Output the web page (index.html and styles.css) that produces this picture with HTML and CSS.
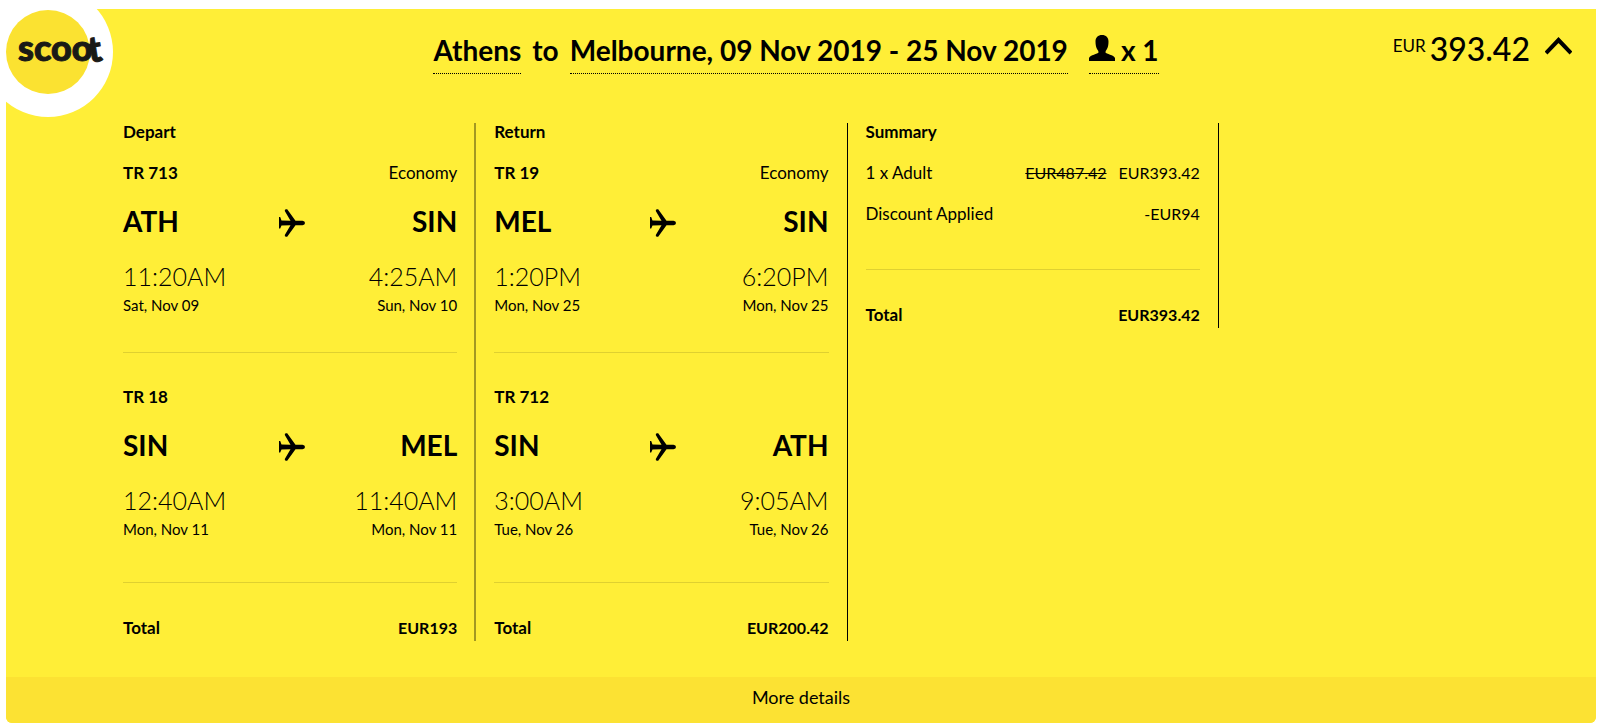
FILE: index.html
```
<!DOCTYPE html>
<html lang="en">
<head>
    <meta charset="UTF-8">
    <meta name="viewport" content="width=device-width, initial-scale=1.0">
    <title>Athens to Melbourne - Scoot</title>
    <link rel="stylesheet" href="styles.css">
</head>
<body>

<!-- shared icons -->
<svg class="sprite" aria-hidden="true">
    <symbol id="plane" viewBox="0 0 26 28">
        <path d="M0 8h1.200L2.500 11.500l9 .3L5.800 2Q5.500 .3 7 .3h1.200L16.500 11.800H23.500Q26 12.200 26 14T23.500 16.200H16.500L8.200 27.700H7Q5.500 27.700 5.800 26L11.500 16.200l-9 .3L1.200 19.500H0z"/>
    </symbol>
</svg>

<main class="card">
    <svg class="logo" viewBox="0 0 130 130" role="img" aria-label="Scoot">
        <circle cx="65" cy="65" r="65" fill="#fff"/>
        <circle cx="65" cy="65" r="42" fill="#fbe231"/>
        <text class="logo-text" x="35" y="74">scoo</text>
        <text class="logo-text" x="105" y="75" transform="rotate(-9 110 65)">t</text>
    </svg>

    <header class="top">
        <div class="route">
            <button class="edit">Athens</button>
            <span>to</span>
            <button class="edit">Melbourne, 09 Nov 2019 - 25 Nov 2019</button>
            <button class="edit pax">
                <svg width="26" height="26" viewBox="0 0 26 26" aria-hidden="true"><path d="M13 0C9 0 6.500 2.500 6.500 6.500c0 3 .5 5.500 1.500 7.500 1 1.500 1.500 2 1.500 3.500C9 19 1 20 0 23v3h26v-3c-1-3-9-4-9.500-5.500 0-1.500.5-2 1.500-3.500 1-2 1.500-4.500 1.500-7.500C19.500 2.500 17 0 13 0z"/></svg>
                x 1
            </button>
        </div>
        <button class="price">
            <span class="currency">EUR</span>
            <span class="amount">393.42</span>
            <svg width="27" height="18" viewBox="0 0 27 18" aria-hidden="true"><path d="M1 16L13.500 3l12.500 13" fill="none" stroke="#000" stroke-width="4"/></svg>
        </button>
    </header>

    <div class="columns">
        <section class="column">
            <h2>Depart</h2>
            <div class="segment">
                <div class="row"><b>TR 713</b><span>Economy</span></div>
                <div class="row airports"><b>ATH</b><svg class="plane"><use href="#plane"/></svg><b>SIN</b></div>
                <div class="row times"><span>11:20AM</span><span>4:25AM</span></div>
                <div class="row dates"><span>Sat, Nov 09</span><span>Sun, Nov 10</span></div>
            </div>
            <div class="segment">
                <div class="row"><b>TR 18</b></div>
                <div class="row airports"><b>SIN</b><svg class="plane"><use href="#plane"/></svg><b>MEL</b></div>
                <div class="row times"><span>12:40AM</span><span>11:40AM</span></div>
                <div class="row dates"><span>Mon, Nov 11</span><span>Mon, Nov 11</span></div>
            </div>
            <div class="row total"><b>Total</b><b class="money">EUR193</b></div>
        </section>

        <section class="column">
            <h2>Return</h2>
            <div class="segment">
                <div class="row"><b>TR 19</b><span>Economy</span></div>
                <div class="row airports"><b>MEL</b><svg class="plane"><use href="#plane"/></svg><b>SIN</b></div>
                <div class="row times"><span>1:20PM</span><span>6:20PM</span></div>
                <div class="row dates"><span>Mon, Nov 25</span><span>Mon, Nov 25</span></div>
            </div>
            <div class="segment">
                <div class="row"><b>TR 712</b></div>
                <div class="row airports"><b>SIN</b><svg class="plane"><use href="#plane"/></svg><b>ATH</b></div>
                <div class="row times"><span>3:00AM</span><span>9:05AM</span></div>
                <div class="row dates"><span>Tue, Nov 26</span><span>Tue, Nov 26</span></div>
            </div>
            <div class="row total"><b>Total</b><b class="money">EUR200.42</b></div>
        </section>

        <section class="column">
            <h2>Summary</h2>
            <div class="charges">
                <div class="row"><span>1 x Adult</span><span class="money"><s>EUR487.42</s>EUR393.42</span></div>
                <div class="row"><span>Discount Applied</span><span class="money">-EUR94</span></div>
            </div>
            <div class="row total"><b>Total</b><b class="money">EUR393.42</b></div>
        </section>
    </div>

    <button class="more">More details</button>
</main>

</body>
</html>
```
FILE: styles.css
```
body {
    margin: 0;
    padding: 9px 4px 4px 6px;
    background: #fff;
    color: #000;
    font-family: Lato, "Liberation Sans", sans-serif;
    font-size: 17px;
    line-height: 18px;
    overflow-x: hidden;
}
button {
    border: 0;
    padding: 0;
    background: none;
    color: inherit;
    font: inherit;
    cursor: pointer;
}
.sprite {
    display: none;
}
.card {
    position: relative;
    background: #ffee37;
    border-radius: 0 0 6px 6px;
}

/* round logo hangs over the card corner */
.logo {
    position: absolute;
    top: -22px;
    left: -23px;
    width: 130px;
    height: 130px;
}
.logo-text {
    font-size: 36px;
    font-weight: 900;
    fill: #1a1a16;
    stroke: #1a1a16;
    stroke-width: 1px;
}

.top {
    display: grid;
    grid-template-columns: 1fr auto 1fr;
    align-items: start;
    padding: 22px 24px 26px 14px;
}
.route {
    grid-column: 2;
    display: flex;
    gap: 11px;
    font-size: 28px;
    font-weight: 700;
    line-height: 38px;
}
.edit {
    padding-bottom: 4px;
    border-bottom: 1px dotted #000;
    white-space: nowrap;
}
.pax {
    display: flex;
    align-items: center;
    gap: 6px;
    margin-left: 10px;
}
.pax svg {
    margin-bottom: 4px;
}
.price {
    justify-self: end;
    display: flex;
    align-items: flex-start;
    padding-top: 2px;
    line-height: 32px;
}
.currency {
    font-size: 17px;
    line-height: 26px;
    margin-right: 4px;
}
.amount {
    font-size: 32px;
    font-weight: 500;
    margin-right: 15px;
}
.price svg {
    margin-top: 4px;
}

.columns {
    display: grid;
    grid-template-columns: repeat(4, 1fr);
    align-items: start;
    padding: 23px 6px 36px 99px;
}
.column {
    padding: 0 18px 4px;
    border-right: 1px solid #000;
}
.column:first-child {
    padding-right: 17px;
    border-right: 2px solid #a39822;
}
h2 {
    margin: 0 0 23px;
    font-size: 17px;
    line-height: 18px;
}
.row {
    display: flex;
    justify-content: space-between;
    align-items: center;
}
.segment {
    padding-bottom: 37px;
}
.segment + .segment {
    border-top: 1px solid #dfd030;
    padding-top: 35px;
}
.airports {
    display: grid;
    grid-template-columns: 1fr auto 1fr;
    margin: 22px 0;
    font-size: 28px;
    line-height: 34px;
}
.airports b:last-child {
    text-align: right;
}
.plane {
    width: 26px;
    height: 28px;
    margin: 4px 0 0 4px;
}
.times {
    margin-bottom: 3px;
    font-size: 25px;
    font-weight: 300;
    line-height: 32px;
}
.dates {
    font-size: 15px;
    line-height: 20px;
}
.total {
    margin-top: 6px;
    border-top: 1px solid #dfd030;
    padding-top: 36px;
}
.charges {
    display: grid;
    gap: 23px;
    padding-bottom: 40px;
}
.money {
    font-size: 16px;
}
.money s {
    margin-right: 12px;
}

.more {
    display: block;
    width: 100%;
    padding: 11px 0 17px;
    background: #fce233;
    border-radius: 0 0 6px 6px;
    font-size: 18px;
    line-height: 18px;
}
```
